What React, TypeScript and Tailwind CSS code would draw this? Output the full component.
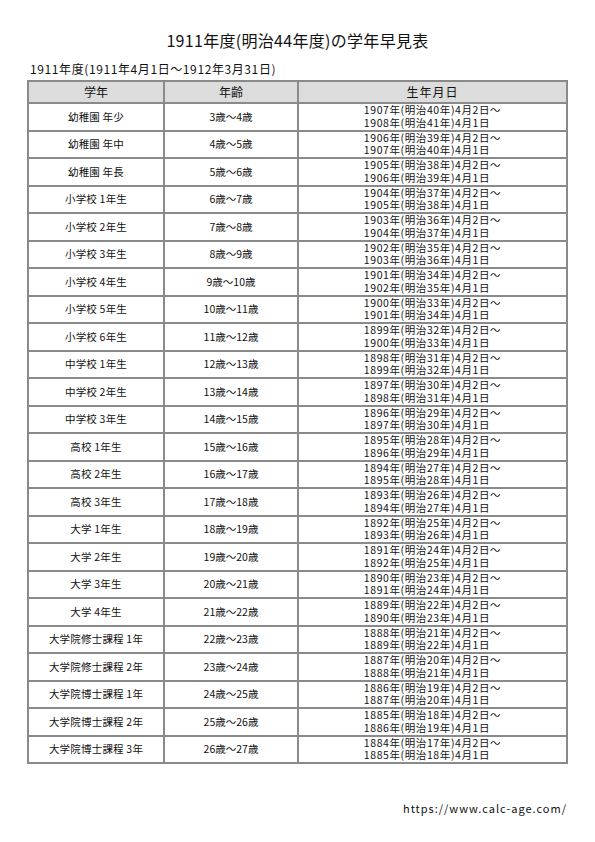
const grades = [
  "幼稚園 年少",
  "幼稚園 年中",
  "幼稚園 年長",
  "小学校 1年生",
  "小学校 2年生",
  "小学校 3年生",
  "小学校 4年生",
  "小学校 5年生",
  "小学校 6年生",
  "中学校 1年生",
  "中学校 2年生",
  "中学校 3年生",
  "高校 1年生",
  "高校 2年生",
  "高校 3年生",
  "大学 1年生",
  "大学 2年生",
  "大学 3年生",
  "大学 4年生",
  "大学院修士課程 1年",
  "大学院修士課程 2年",
  "大学院博士課程 1年",
  "大学院博士課程 2年",
  "大学院博士課程 3年",
];

const rows = grades.map((grade, i) => ({
  grade,
  age: `${i + 3}歳～${i + 4}歳`,
  from: `${1907 - i}年(明治${40 - i}年)4月2日～`,
  to: `${1908 - i}年(明治${41 - i}年)4月1日`,
}));

const font = { fontFamily: '"Noto Sans CJK JP", "Noto Sans", sans-serif' };

const cell = "border-2 border-[#8a8a8a] p-0 text-center align-middle";

export default function App() {
  return (
    <div className="w-[595px] h-[842px] bg-white text-[#111]" style={font}>
      <h1 className="pt-[31px] text-center text-[16px] leading-[18px] tracking-[0.3px] font-normal">
        1911年度(明治44年度)の学年早見表
      </h1>
      <div className="ml-[30px] mt-[13px] text-[12px] leading-[14px] tracking-[0.6px]">
        1911年度(1911年4月1日～1912年3月31日)
      </div>
      <table className="ml-[27px] mt-[4px] w-[541px] border-collapse table-fixed">
        <colgroup>
          <col className="w-[136px]" />
          <col className="w-[134px]" />
          <col />
        </colgroup>
        <thead>
          <tr className="bg-[#dcdcdc]">
            <th className={`${cell} h-[22px] text-[12px] font-normal leading-[14px]`}>学年</th>
            <th className={`${cell} h-[22px] text-[12px] font-normal leading-[14px]`}>年齢</th>
            <th className={`${cell} h-[22px] text-[12px] font-normal leading-[14px] tracking-[1px]`}>生年月日</th>
          </tr>
        </thead>
        <tbody>
          {rows.map((r) => (
            <tr key={r.grade}>
              <td className={`${cell} h-[27.5px] text-[10.5px] leading-[12px] tracking-[0.2px]`}>
                {r.grade}
              </td>
              <td className={`${cell} h-[27.5px] text-[10.5px] leading-[12px]`}>
                {r.age}
              </td>
              <td className={`${cell} h-[27.5px] text-[10.5px] leading-[12.5px] tracking-[0.6px]`}>
                <div className="w-fit mx-auto text-left">
                  <div>{r.from}</div>
                  <div>{r.to}</div>
                </div>
              </td>
            </tr>
          ))}
        </tbody>
      </table>
      <div className="mt-[38px] mr-[28px] text-right text-[11px] leading-[13px] tracking-[1px]">
        https://www.calc-age.com/
      </div>
    </div>
  );
}
